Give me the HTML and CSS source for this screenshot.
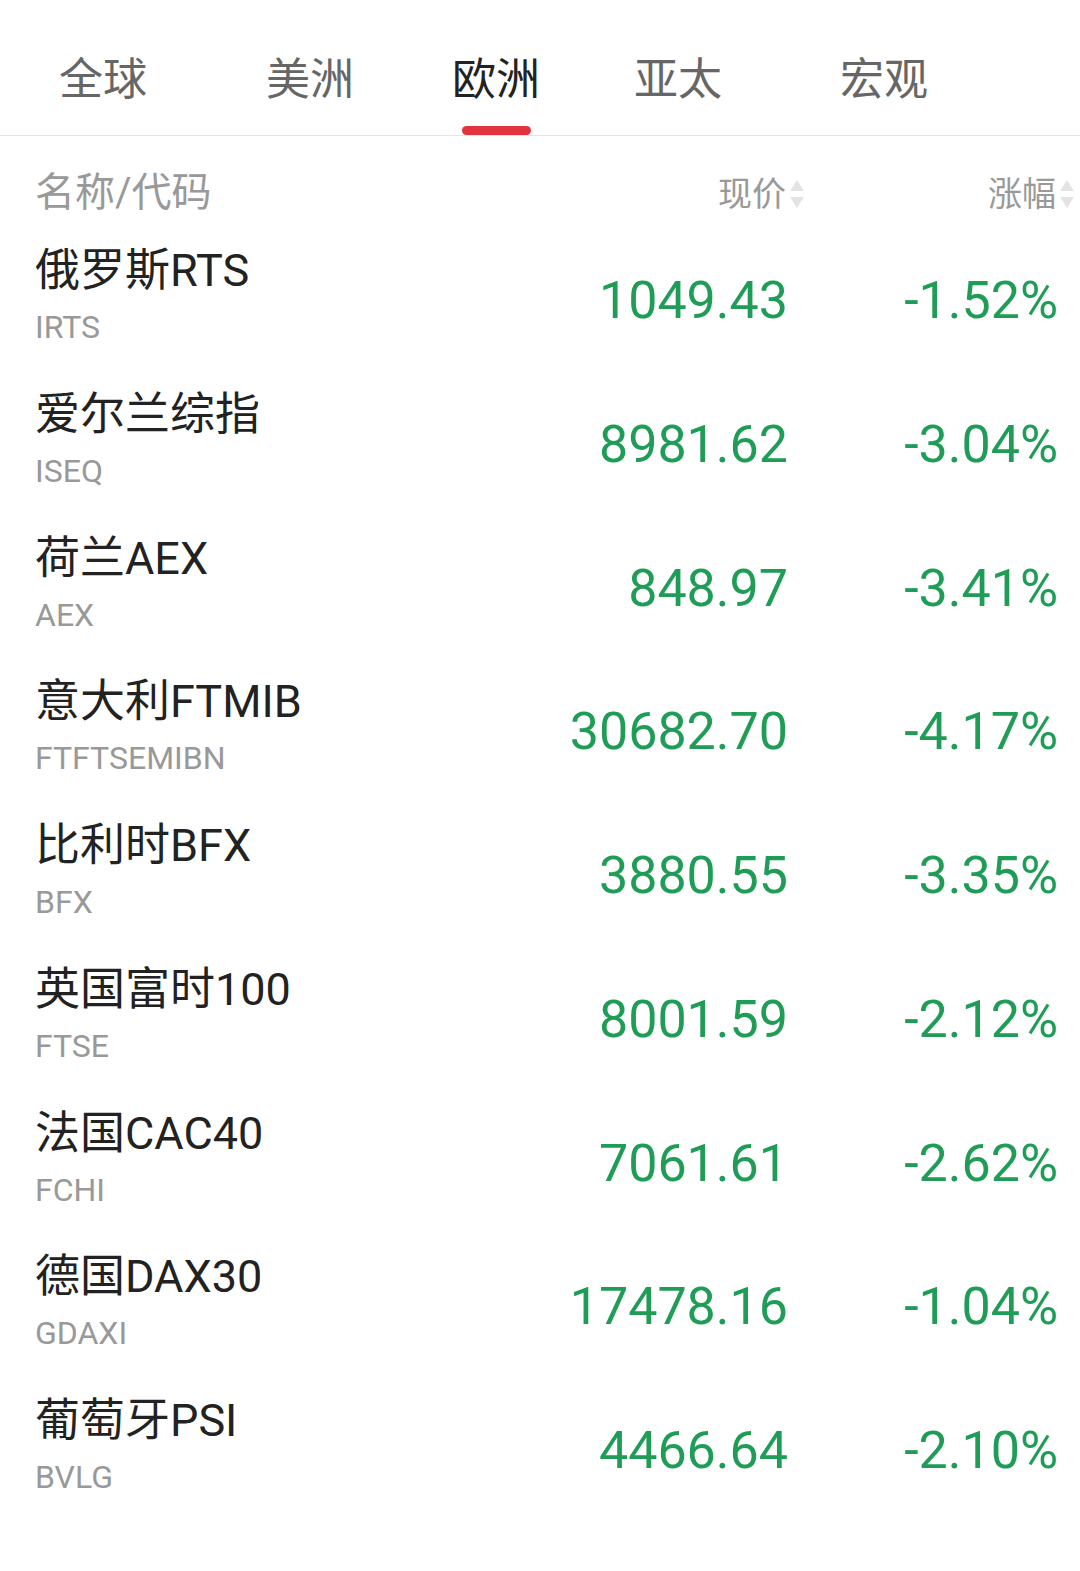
FILE: index.html
```html
<!DOCTYPE html>
<html lang="zh-CN">
<head>
    <meta charset="UTF-8">
    <meta name="viewport" content="width=device-width, initial-scale=1.0">
    <title>全球指数 - 欧洲</title>
    <link rel="stylesheet" href="styles.css">
</head>
<body>

    <div class="tabs">
        <div class="tab">全球<span class="bar"></span></div>
        <div class="tab">美洲<span class="bar"></span></div>
        <div class="tab active">欧洲<span class="bar"></span></div>
        <div class="tab">亚太<span class="bar"></span></div>
        <div class="tab">宏观<span class="bar"></span></div>
    </div>

    <div class="list-head">
        <div class="head-name">名称/代码</div>
        <div class="head-sort">现价
            <svg class="sort" viewBox="0 0 16 32"><path d="M8 2 L15 13 L1 13 Z M8 30 L15 19 L1 19 Z"/></svg>
        </div>
        <div class="head-sort">涨幅
            <svg class="sort" viewBox="0 0 16 32"><path d="M8 2 L15 13 L1 13 Z M8 30 L15 19 L1 19 Z"/></svg>
        </div>
    </div>

    <div class="list">
        <div class="row">
            <div class="name"><div class="title">俄罗斯RTS</div><div class="code">IRTS</div></div>
            <div class="price">1049.43</div>
            <div class="change">-1.52%</div>
        </div>
        <div class="row">
            <div class="name"><div class="title">爱尔兰综指</div><div class="code">ISEQ</div></div>
            <div class="price">8981.62</div>
            <div class="change">-3.04%</div>
        </div>
        <div class="row">
            <div class="name"><div class="title">荷兰AEX</div><div class="code">AEX</div></div>
            <div class="price">848.97</div>
            <div class="change">-3.41%</div>
        </div>
        <div class="row">
            <div class="name"><div class="title">意大利FTMIB</div><div class="code">FTFTSEMIBN</div></div>
            <div class="price">30682.70</div>
            <div class="change">-4.17%</div>
        </div>
        <div class="row">
            <div class="name"><div class="title">比利时BFX</div><div class="code">BFX</div></div>
            <div class="price">3880.55</div>
            <div class="change">-3.35%</div>
        </div>
        <div class="row">
            <div class="name"><div class="title">英国富时100</div><div class="code">FTSE</div></div>
            <div class="price">8001.59</div>
            <div class="change">-2.12%</div>
        </div>
        <div class="row">
            <div class="name"><div class="title">法国CAC40</div><div class="code">FCHI</div></div>
            <div class="price">7061.61</div>
            <div class="change">-2.62%</div>
        </div>
        <div class="row">
            <div class="name"><div class="title">德国DAX30</div><div class="code">GDAXI</div></div>
            <div class="price">17478.16</div>
            <div class="change">-1.04%</div>
        </div>
        <div class="row">
            <div class="name"><div class="title">葡萄牙PSI</div><div class="code">BVLG</div></div>
            <div class="price">4466.64</div>
            <div class="change">-2.10%</div>
        </div>
    </div>

</body>
</html>
```

FILE: styles.css
```css
body {
    margin: 0;
    background: #fff;
    font-family: Roboto, "Noto Sans CJK SC", sans-serif;
    color: #222;
}

/* top tabs */
.tabs {
    display: grid;
    grid-template-columns: 207px 186px 182px 206px auto;
    height: 135px;
    padding-left: 59px;
    border-bottom: 1px solid #e6e6e6;
    align-items: end;
}
.tab {
    justify-self: start;
    display: flex;
    flex-direction: column;
    align-items: center;
    font-size: 44px;
    line-height: 44px;
    color: #666;
}
.tab .bar {
    width: 69px;
    height: 9px;
    margin-top: 24px;
    border-radius: 5px;
    background: transparent;
}
.tab.active {
    color: #222;
}
.tab.active .bar {
    background: #e2343f;
}

/* column header */
.list-head {
    display: grid;
    grid-template-columns: 1fr auto 270px;
    align-items: center;
    height: 62px;
    padding: 26px 5px 0 35px;
    color: #999;
}
.head-name {
    font-size: 40px;
    line-height: 40px;
}
.head-sort {
    display: flex;
    justify-content: flex-end;
    align-items: center;
    font-size: 34px;
    line-height: 40px;
    padding-top: 2px;
}
.sort {
    width: 16px;
    height: 32px;
    margin-left: 3px;
    fill: #e3e3e3;
}

/* rows */
.row {
    display: grid;
    grid-template-columns: 1fr auto 270px;
    align-items: start;
    height: 143.75px;
    padding: 0 22px 0 35px;
}
.name {
    padding-top: 17px;
}
.title {
    font-size: 45px;
    line-height: 60px;
    color: #222;
}
.code {
    font-size: 32px;
    line-height: 52px;
    color: #999;
}
.price, .change {
    padding-top: 47px;
    font-size: 52px;
    line-height: 60px;
    color: #1f9d57;
    text-align: right;
}
```
